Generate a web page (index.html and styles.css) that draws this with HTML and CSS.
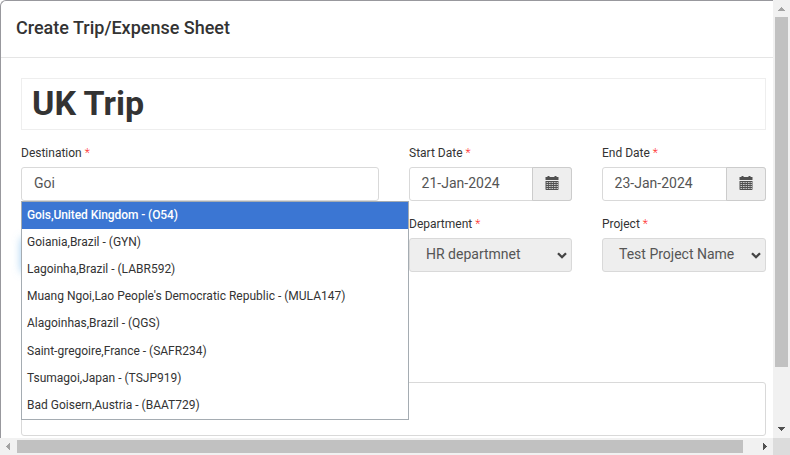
FILE: index.html
```html
<!DOCTYPE html>
<html lang="en">
<head>
<meta charset="utf-8">
<title>Create Trip/Expense Sheet</title>
<link rel="stylesheet" href="styles.css">
</head>
<body>
<svg width="0" height="0" class="defs">
  <symbol id="calendar" viewBox="0 0 14 14">
    <path fill="#505050" d="M.5 1H2.5V0H4.5V1H9.5V0H11.5V1H13.5V4H.5ZM.5 5H13.5V13.3Q13.5 14 12.8 14H1.2Q.5 14 .5 13.3Z"/>
    <path stroke="#c4c4c4" stroke-width="1" stroke-dasharray="1.7 .8" d="M1.5 6.5H13M1.5 8.5H13M1.5 10.5H13M1.5 12.5H13"/>
  </symbol>
  <symbol id="chevron" viewBox="0 0 10 7">
    <path d="M1 1.2 5 5.2 9 1.2" fill="none" stroke="#444" stroke-width="2.3"/>
  </symbol>
</svg>
<div class="viewport">
  <main class="modal">
    <header class="modal-header"><h1>Create Trip/Expense Sheet</h1></header>
    <div class="modal-body">
      <div class="trip-name">UK Trip</div>
      <div class="form">
        <div class="field destination">
          <label>Destination <i>*</i></label>
          <div class="control"><span>Goi</span></div>
          <ul class="suggestions">
            <li class="active">Gois,United Kingdom - (O54)</li>
            <li>Goiania,Brazil - (GYN)</li>
            <li>Lagoinha,Brazil - (LABR592)</li>
            <li>Muang Ngoi,Lao People's Democratic Republic - (MULA147)</li>
            <li>Alagoinhas,Brazil - (QGS)</li>
            <li>Saint-gregoire,France - (SAFR234)</li>
            <li>Tsumagoi,Japan - (TSJP919)</li>
            <li>Bad Goisern,Austria - (BAAT729)</li>
          </ul>
        </div>
        <div class="field">
          <label>Start Date <i>*</i></label>
          <div class="control date"><span>21-Jan-2024</span><b><svg width="14" height="14"><use href="#calendar"/></svg></b></div>
        </div>
        <div class="field">
          <label>End Date <i>*</i></label>
          <div class="control date"><span>23-Jan-2024</span><b><svg width="14" height="14"><use href="#calendar"/></svg></b></div>
        </div>
        <div class="field">
          <label></label>
          <div class="control focused"></div>
        </div>
        <div class="field">
          <label>Department <i>*</i></label>
          <div class="control select"><span>HR departmnet</span><svg width="10" height="7"><use href="#chevron"/></svg></div>
        </div>
        <div class="field">
          <label>Project <i>*</i></label>
          <div class="control select"><span>Test Project Name</span><svg width="10" height="7"><use href="#chevron"/></svg></div>
        </div>
      </div>
      <div class="notes"></div>
    </div>
  </main>
  <div class="bar vertical">
    <svg width="17" height="17" shape-rendering="crispEdges"><path fill="#a3a3a3" d="M5 11V10H6V9H7V8H8V7H9V8H10V9H11V10H12V11Z"/></svg>
    <div class="thumb"></div>
    <svg width="17" height="17" shape-rendering="crispEdges"><path fill="#505050" d="M5 6V7H6V8H7V9H8V10H9V9H10V8H11V7H12V6Z"/></svg>
  </div>
  <div class="bar horizontal">
    <svg width="17" height="17" shape-rendering="crispEdges"><path fill="#a3a3a3" d="M10 5H9V6H8V7H7V8H6V9H7V10H8V11H9V12H10Z"/></svg>
    <div class="thumb"></div>
    <svg width="17" height="17" shape-rendering="crispEdges"><path fill="#505050" d="M7 5H8V6H9V7H10V8H11V9H10V10H9V11H8V12H7Z"/></svg>
  </div>
  <div class="corner"></div>
</div>
</body>
</html>
```
FILE: styles.css
```css
* { box-sizing: border-box; }
body { margin: 0; font-family: Roboto, "Liberation Sans", sans-serif; color: #333; overflow: hidden; }
.defs { display: block; }
.viewport { display: grid; grid-template: 438px 17px / 773px 17px; width: 790px; height: 455px; background: #fff; }
.modal { border: solid #98989d; border-width: 1px 0 0 1px; border-top-left-radius: 6px; overflow: hidden; }
.modal-header { height: 57px; padding: 0 15px; border-bottom: 1px solid #e5e5e5; display: flex; align-items: center; }
h1 { margin: 0; padding-bottom: 3px; font-size: 18px; line-height: 26px; font-weight: 500; white-space: nowrap; }
.modal-body { padding: 20px 7px 0 20px; }
.trip-name { height: 52px; padding: 0 10px; border: 1px solid #eee; font-size: 34px; line-height: 49px; font-weight: 700; }
.form { display: grid; grid-template-columns: 358px 163px 164px; column-gap: 30px; row-gap: 14px; padding-top: 14px; }
.field { display: flex; flex-direction: column; }
label { height: 23px; font-size: 12px; line-height: 18px; }
label i { color: #ff2b2b; font-style: normal; font-weight: 300; }
.control { display: flex; align-items: center; height: 34px; padding: 0 12px; border: 1px solid #d9d9d9; border-radius: 3px; font-size: 14px; line-height: 32px; color: #555; background: #fff; white-space: nowrap; }
.control > span { margin-top: -2px; }
.date { padding: 0 0 0 11.5px; justify-content: space-between; }
.date > span { letter-spacing: 0.02px; }
.date b { display: flex; align-items: center; justify-content: center; width: 40px; height: 34px; margin: -1px -1px -1px 0; padding-bottom: 2px; border: 1px solid #ccc; border-radius: 0 3px 3px 0; background: #eee; }
.select { justify-content: space-between; padding: 0 4px 0 16px; background: #eee; }
.focused { border-color: #66afe9; box-shadow: 0 0 8px rgba(102, 175, 233, .6); }
.destination { position: relative; }
.suggestions { position: absolute; z-index: 2; top: 57px; left: 0; width: 388px; height: 219px; margin: 0; padding: 0; list-style: none; border: 1px solid #a5acb2; background: #fff; font-size: 12px; }
.suggestions li { height: 27.12px; padding-left: 5px; line-height: 27px; white-space: nowrap; }
.suggestions .active { background: #3b76d3; color: #fff; font-weight: 500; letter-spacing: -0.08px; }
.notes { height: 54px; margin-top: 110px; border: 1px solid #d9d9d9; border-radius: 3px; }
.bar { display: flex; background: #f1f1f1; }
.bar svg { flex: none; }
.thumb { background: #c1c1c1; }
.vertical { flex-direction: column; justify-content: space-between; }
.vertical .thumb { width: 13px; height: 350px; margin: 0 2px auto; }
.horizontal .thumb { width: 726px; height: 13px; margin: 2px auto 2px 0; }
.corner { background: #dcdcdc; }
```
